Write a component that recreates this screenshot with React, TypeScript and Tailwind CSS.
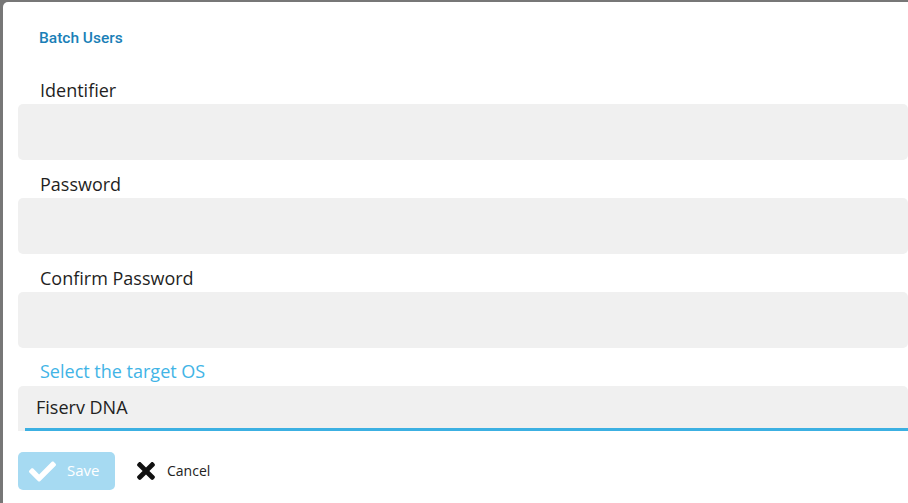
import React from "react";
import { FaCheck, FaTimes } from "react-icons/fa";

function Field({ label, top = false }: { label: string; top?: boolean }) {
  return (
    <div className={top ? "" : "mt-[12px]"}>
      <div className="h-[26px] flex items-center pl-[22px] pb-[2px] text-[18px] text-[#1f1f1f]">{label}</div>
      <div className="h-[56px] bg-[#f0f0f0] rounded-[5px]" />
    </div>
  );
}

export default function App() {
  return (
    <div className="w-[908px] h-[503px] overflow-hidden bg-[#777777] pt-[2px] pl-[3px]" style={{ fontFamily: '"Open Sans", "Noto Sans", sans-serif' }}>
      <div className="h-full bg-white rounded-tl-[5px] pl-[15px] pt-[26px]">
        <div
          className="h-[20px] flex items-center pl-[21px] pt-[2px] text-[15.5px] font-medium text-[#1a7fb7]"
          style={{ fontFamily: 'Roboto, "Noto Sans", sans-serif' }}
        >
          Batch Users
        </div>
        <div className="mt-[30px]">
          <Field label="Identifier" top />
          <Field label="Password" />
          <Field label="Confirm Password" />
          <div className="mt-[12px]">
            <div className="h-[26px] flex items-center pl-[22px] pb-[3px] text-[18px] text-[#41b4e6]">Select the target OS</div>
            <div className="h-[45px] bg-[#f0f0f0] rounded-t-[5px] flex flex-col">
              <div className="flex-1 flex items-center pl-[18px] text-[18px] text-[#222]">Fiserv DNA</div>
              <div className="ml-[7px] h-[3px] bg-[#3cb0e2]" />
            </div>
          </div>
        </div>
        <div className="mt-[21px] flex items-center">
          <div className="w-[97px] h-[38px] rounded-[5px] bg-[#a6daf2] flex items-center pl-[11px] text-white text-[15px]">
            <FaCheck size={27} />
            <span className="ml-[11px] pb-[2px]">Save</span>
          </div>
          <div className="ml-[18px] flex items-center text-[14px] text-[#222]">
            <FaTimes size={26} color="#111" />
            <span className="ml-[8px] pb-[2px]">Cancel</span>
          </div>
        </div>
      </div>
    </div>
  );
}
